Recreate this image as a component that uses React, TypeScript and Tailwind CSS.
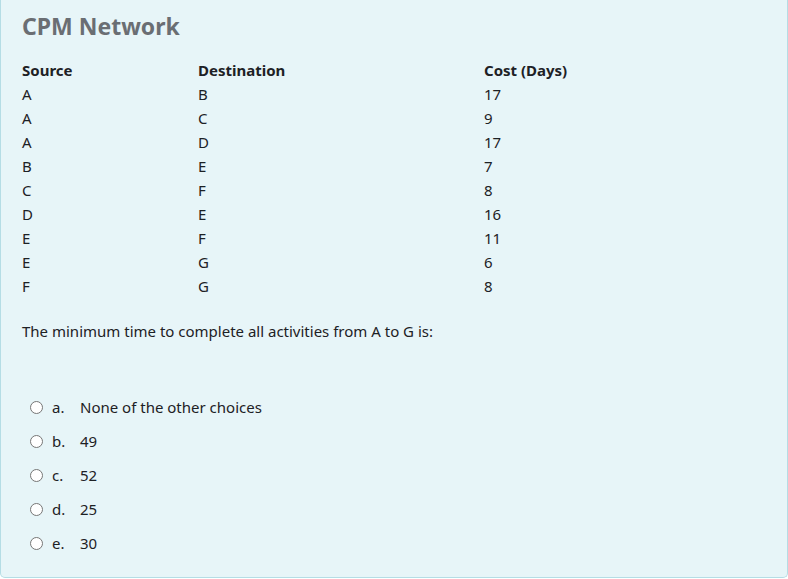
import React from "react";

const rows: [string, string, string][] = [
  ["A", "B", "17"],
  ["A", "C", "9"],
  ["A", "D", "17"],
  ["B", "E", "7"],
  ["C", "F", "8"],
  ["D", "E", "16"],
  ["E", "F", "11"],
  ["E", "G", "6"],
  ["F", "G", "8"],
];

const choices: [string, string][] = [
  ["a.", "None of the other choices"],
  ["b.", "49"],
  ["c.", "52"],
  ["d.", "25"],
  ["e.", "30"],
];

export default function App() {
  return (
    <div className="w-[788px] h-[579px] bg-white overflow-hidden font-['Noto_Sans',sans-serif] text-[15px] text-[#1d2125]">
      <div className="h-[578px] bg-[#e7f5f8] border-x border-b border-[#b5dde5] rounded-b-[5px] pl-[21px] pt-[11px]">
        <h2 className="text-[23px] leading-[30px] font-bold text-[#6a6e73]">CPM Network</h2>

        {/* Table */}
        <div className="mt-[17px] grid grid-cols-[176px_286px_1fr]">
          <div className="h-[24px] flex items-center font-bold">Source</div>
          <div className="h-[24px] flex items-center font-bold">Destination</div>
          <div className="h-[24px] flex items-center font-bold">Cost (Days)</div>
          {rows.map(([s, d, c], i) => (
            <React.Fragment key={i}>
              <div className="h-[24px] flex items-center">{s}</div>
              <div className="h-[24px] flex items-center">{d}</div>
              <div className="h-[24px] flex items-center">{c}</div>
            </React.Fragment>
          ))}
        </div>

        <p className="mt-[22px] h-[22px] flex items-center">
          The minimum time to complete all activities from A to G is:
        </p>

        {/* Choices */}
        <div className="mt-[48px] flex flex-col">
          {choices.map(([k, t]) => (
            <label key={k} className="h-[34px] flex items-center pl-[8px]">
              <span className="w-[13px] h-[13px] rounded-full border border-[#767676] bg-white shrink-0" />
              <span className="ml-[9px] w-[28px]">{k}</span>
              <span>{t}</span>
            </label>
          ))}
        </div>
      </div>
    </div>
  );
}
